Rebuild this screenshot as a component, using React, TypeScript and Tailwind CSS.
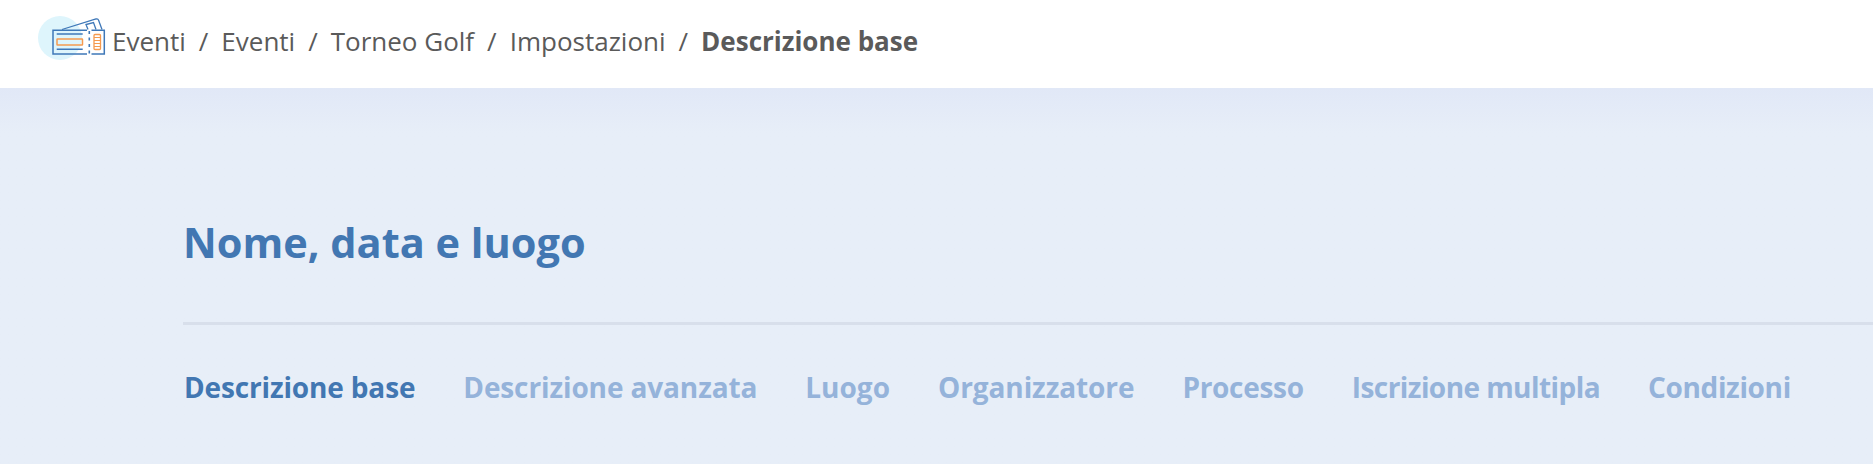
const crumbs = ["Eventi", "Eventi", "Torneo Golf", "Impostazioni"];

const tabs = [
  { label: "Descrizione base", cls: "text-[#4277b2] tracking-[-0.15px]" },
  { label: "Descrizione avanzata", cls: "tracking-[-0.12px]" },
  { label: "Luogo", cls: "" },
  { label: "Organizzatore", cls: "tracking-[-0.1px]" },
  { label: "Processo", cls: "tracking-[-0.3px]" },
  { label: "Iscrizione multipla", cls: "tracking-[-0.56px]" },
  { label: "Condizioni", cls: "tracking-[-0.35px]" },
];

function TicketIcon() {
  return (
    <svg width="70" height="46" viewBox="0 0 70 46" fill="none" className="shrink-0 mb-[4px]">
      <circle cx="22" cy="22" r="22" fill="#def5fc" />
      <path d="M24 13.5 L58 3 Q60 2.5 60.5 4 L64 13.5" stroke="#3f78b8" strokeWidth="1.3" />
      <path d="M50 13.5 L48 8.5 L55.5 6.5 L58 13.5" stroke="#3f78b8" strokeWidth="1.3" />
      <path d="M49 14.3 H15 V38 H49 M53.5 14.3 H66.3 V38 H53.5" stroke="#3f78b8" strokeWidth="1.5" />
      <path d="M51.3 15 V38" stroke="#3f78b8" strokeWidth="1.6" strokeDasharray="3 3.5" />
      <path d="M18.7 18 H44.7 M18.7 33.3 H44.7" stroke="#3f78b8" strokeWidth="1.4" />
      <rect x="19" y="23" width="25.5" height="6" rx="0.5" stroke="#f59a4f" strokeWidth="1.5" />
      <rect x="56" y="18.5" width="6.5" height="15" rx="1" stroke="#f59a4f" strokeWidth="1.3" />
      <path d="M56 21.5 H62.5 M56 24.5 H62.5 M56 27.5 H62.5 M56 30.5 H62.5" stroke="#f59a4f" strokeWidth="1" />
    </svg>
  );
}

export default function App() {
  return (
    <div className="w-[1873px] h-[464px] overflow-hidden font-['Open_Sans',sans-serif]">
      <div className="h-[88px] bg-white flex items-center pl-[38px] pb-[6px] text-[26px] text-[#5a5a5a]">
        <TicketIcon />
        <nav className="flex items-center ml-[4px]">
          {crumbs.map((crumb, i) => (
            <span key={i} className="flex items-center">
              <span>{crumb}</span>
              <span className="mx-[13px]">/</span>
            </span>
          ))}
          <span className="font-bold">Descrizione base</span>
        </nav>
      </div>

      <div className="h-[376px] bg-gradient-to-b from-[#e1e8f7] to-[#e7eef8] to-[45px] pl-[183px]">
        <h1 className="pt-[130px] text-[41.5px] leading-[48px] font-bold text-[#4277b2]">
          Nome, data e luogo
        </h1>
        <div className="mt-[56px] h-[3px] bg-[#d8dfeb]" />
        <div className="flex gap-[48px] mt-[44px] pl-[1px] text-[28px] leading-[36px] font-bold text-[#95b3da]">
          {tabs.map((tab) => (
            <span key={tab.label} className={tab.cls}>
              {tab.label}
            </span>
          ))}
        </div>
      </div>
    </div>
  );
}
